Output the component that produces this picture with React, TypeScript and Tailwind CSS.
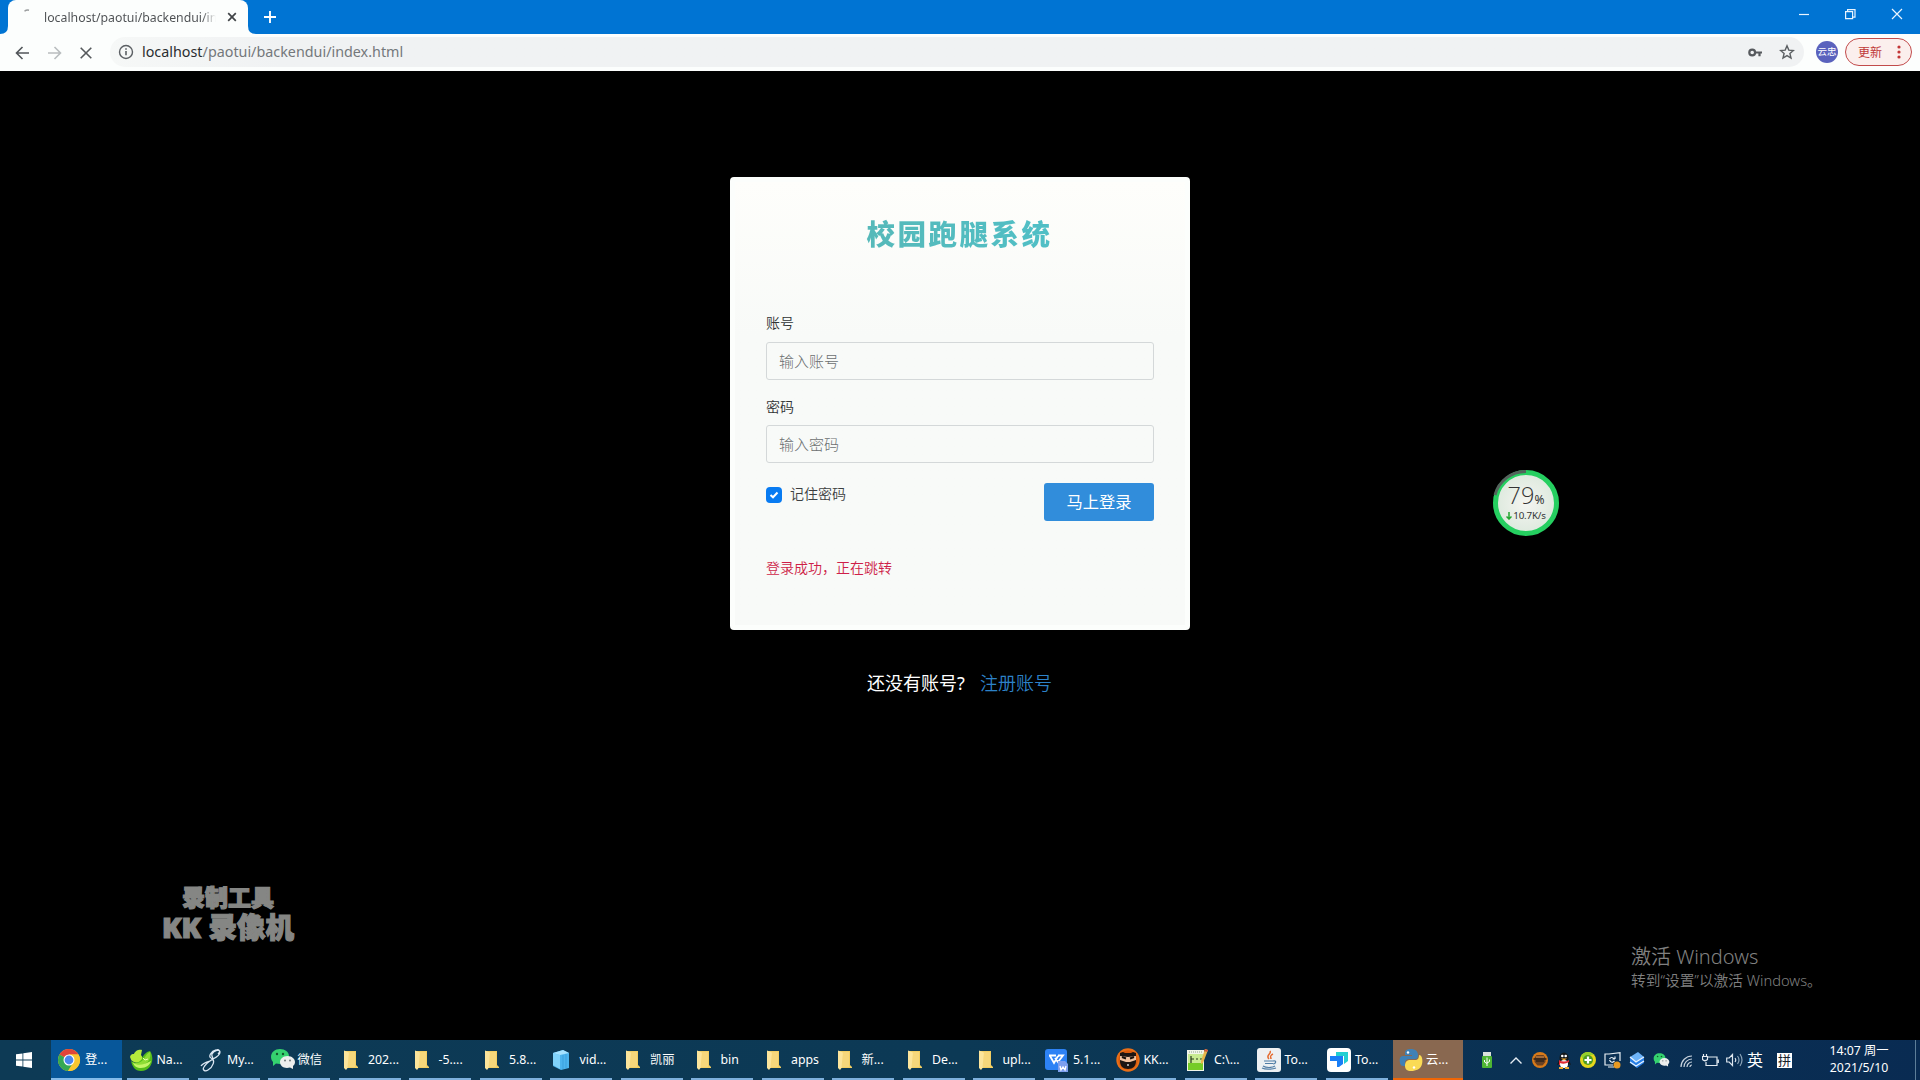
import React from "react";

const FONT = "font-['Noto_Sans','Noto_Sans_CJK_SC',sans-serif]";

const Folder = () => (
  <svg width="24" height="24" viewBox="0 0 24 24">
    <path d="M4 3h12v14l2 2v1H4z" fill="#f3cf63" />
    <path d="M4 2.500l5 2V18l-3 4-2-2z" fill="#fce59c" />
    <path d="M9 4h6v15H7.500z" fill="#f6d77b" />
  </svg>
);

const Chrome = () => (
  <svg width="24" height="24" viewBox="0 0 24 24">
    <circle cx="12" cy="12" r="11" fill="#f9c62f" />
    <path d="M12 12L2.500 6.500A11 11 0 0 1 21.500 6.500H12z" fill="#e0443a" />
    <path d="M12 12L2.500 6.500A11 11 0 0 0 11 23l5.500-8.500z" fill="#35a853" />
    <path d="M12 6.500h9.500A11 11 0 0 1 11 23l5.800-9z" fill="#f9c62f" />
    <circle cx="12" cy="12" r="5.500" fill="#fff" />
    <circle cx="12" cy="12" r="4.400" fill="#4a86ee" />
  </svg>
);

const Navicat = () => (
  <svg width="24" height="24" viewBox="0 0 24 24">
    <path d="M1 9c1-3 2-3 4-3 1-4 6-5 8-4l-1 5 2 3c-1 4-6 6-9 4-3-1-3-3-4-5z" fill="#b5ec3c" />
    <path d="M2 13c4 3 8 2 11-2 1-4 4-7 8-8 5 7 2 20-9 20-6 0-9-5-10-10z" fill="#55bd1b" />
    <path d="M3 14c4 2 8 1 11-2 2-3 4-7 7-8 1 4 0 9-5 12-5 3-11 2-13-2z" fill="#8edc35" />
    <path d="M4 15c5 3 11 2 18-2-1 4-5 7-10 7-4 0-7-2-8-5z" fill="#c3f565" />
    <path d="M14 10l2 2 3-1" stroke="#eaffb5" fill="none" />
  </svg>
);

const Script = () => (
  <svg width="24" height="24" viewBox="0 0 24 24" fill="none" stroke="#dce7f3" strokeWidth="1.300">
    <path d="M19 6c3-3 1-5-2-4-5 1-8 7-5 8 5 2 2 9-3 12-3 2-6 0-4-3 2-4 6-6 9-8 4-2 7-5 7-7 0-3-6-2-8 2-1 3 2 3 1 7M2 18c2-3 6-4 9-5" />
  </svg>
);

const WeChat = ({ size = 26 }: { size?: number }) => (
  <svg width={size} height={size} viewBox="0 0 26 26">
    <path d="M1 10C1 5 5 2 10 2s9 3 9 7-4 8-9 8l-4-.5L3 19v-4c-1-1-2-3-2-5z" fill="#35d26f" />
    <circle cx="7" cy="7" r="1.200" fill="#12582e" />
    <circle cx="13" cy="7" r="1.200" fill="#12582e" />
    <path d="M10 15c0-3 3-6 7.500-6s7.500 3 7.500 6c0 2-1 3-2 4v3l-3-1.500C14 22 10 19 10 15z" fill="#eceeed" />
    <circle cx="15" cy="13.500" r="1" fill="#71797a" />
    <circle cx="20" cy="13.500" r="1" fill="#71797a" />
  </svg>
);

const Cube = () => (
  <svg width="24" height="24" viewBox="0 0 24 24">
    <path d="M1 5l10-3 6 3v15l-8 2-8-4z" fill="#4cb4ee" />
    <path d="M1 5l7 2v14l-7-4z" fill="#80d3fb" />
    <path d="M1 5l10-3 6 3-9 2z" fill="#a5e2ff" />
    <path d="M11 7v14M14 6v14" stroke="#3ba1de" />
  </svg>
);

const Wps = () => (
  <svg width="24" height="24" viewBox="0 0 24 24">
    <rect x="0" y="1" width="22" height="21" rx="3" fill="#2d82f5" />
    <path d="M4 7.500h7M5 8l4 7 4-7M10 10l3 4 5-6.500h-5" fill="none" stroke="#fff" strokeWidth="1.800" />
    <path d="M13 13h7l3 3v8H13z" fill="#7d9fee" />
    <path d="M15 18l1 4 2-3 2 3 1-4" fill="none" stroke="#fff" strokeWidth="1.300" />
  </svg>
);

const Ninja = ({ size = 24 }: { size?: number }) => (
  <svg width={size} height={size} viewBox="0 0 24 24">
    <circle cx="12" cy="12" r="11.700" fill="#e96f18" />
    <circle cx="12" cy="12" r="9.800" fill="#d85b0d" />
    <path d="M4 5l3-1 2 1h6l2-1 3 1v8c0 5-3 8-8 8s-8-3-8-8z" fill="#1c1512" />
    <path d="M4 8l8 1 8-1v4l-6 2h-4l-6-2z" fill="#f1c3a0" />
    <path d="M6 9l4 1.500M18 9l-4 1.500" stroke="#16100c" strokeWidth="2" />
    <circle cx="12" cy="17" r="1" fill="#ccc" />
  </svg>
);

const TrayNinja = () => (
  <svg width="16" height="16" viewBox="0 0 16 16">
    <circle cx="8" cy="8" r="8" fill="#d87a19" />
    <path d="M2.500 6l2-3h7l2 3v4l-3 3.500h-5L2.500 10z" fill="#6a4122" />
    <path d="M1.500 7h13M4 9h8" stroke="#2f2218" strokeWidth="1.500" />
    <path d="M4 5h8" stroke="#dc9551" />
  </svg>
);

const Notepad = () => (
  <svg width="24" height="24" viewBox="0 0 24 24">
    <path d="M1 2h17v21H1z" fill="#f1f5e9" />
    <path d="M2 8h15v14H2z" fill="#75cc27" />
    <path d="M2 6h15v9H2z" fill="#c8eb91" />
    <path d="M3 4h13" stroke="#91a58a" strokeDasharray="1 1" />
    <path d="M5 8v7M5 11h3M10 11h2M14 11h2" stroke="#263a1b" strokeWidth="1.200" />
    <path d="M19 1l3 1-5 13-2 1v-3z" fill="#e7b64b" />
    <path d="M19 1l3 1-1 2-3-1z" fill="#d45b43" />
  </svg>
);

const Java = () => (
  <svg width="24" height="24" viewBox="0 0 24 24">
    <rect width="24" height="24" rx="3" fill="#edf0f2" />
    <path d="M13 3c2 3-5 4-1 8M16 6c-4 2-2 3-2 5" fill="none" stroke="#e56b2f" strokeWidth="1.500" />
    <path d="M7 13h9M8 15.500h8M6 18c3 2 9 2 12 0M16 13c4-1 3 3 0 3M5 20c4 2 11 1 14 0" fill="none" stroke="#517da5" strokeWidth="1.200" />
  </svg>
);

const Todesk = () => (
  <svg width="24" height="24" viewBox="0 0 24 24">
    <rect width="24" height="24" rx="4" fill="#fff" />
    <path d="M9 4h12v9l-4 3V8H9z" fill="#22cfd2" />
    <path d="M3 8h13v8l-4 3h-2v-6H3z" fill="#197ef6" />
  </svg>
);

const Python = () => (
  <svg width="24" height="24" viewBox="0 0 24 24">
    <path d="M12 1C8 1 6 2 6 5v2h7v1H4C1 8 0 11 1 15c1 3 2 3 5 3v-3c0-3 2-4 4-4h6c2 0 3-1 3-4 0-4-3-6-7-6z" fill="#3f81b6" />
    <path d="M20 7c3 0 4 5 3 9-1 5-6 7-11 7-4 0-6-2-6-5 0-4 2-6 5-6h5c3 0 4-2 4-5z" fill="#fadb55" />
    <circle cx="9" cy="4.500" r="1.200" fill="#fff" />
    <circle cx="15" cy="19.500" r="1.200" fill="#fff" />
  </svg>
);

const tasks: { icon: React.ReactNode; label: string }[] = [
  { icon: <Navicat />, label: "Na..." },
  { icon: <Script />, label: "My..." },
  { icon: <WeChat />, label: "微信" },
  { icon: <Folder />, label: "202..." },
  { icon: <Folder />, label: "-5...." },
  { icon: <Folder />, label: "5.8..." },
  { icon: <Cube />, label: "vid..." },
  { icon: <Folder />, label: "凯丽" },
  { icon: <Folder />, label: "bin" },
  { icon: <Folder />, label: "apps" },
  { icon: <Folder />, label: "新..." },
  { icon: <Folder />, label: "De..." },
  { icon: <Folder />, label: "upl..." },
  { icon: <Wps />, label: "5.1..." },
  { icon: <Ninja />, label: "KK..." },
  { icon: <Notepad />, label: "C:\\..." },
  { icon: <Java />, label: "To..." },
  { icon: <Todesk />, label: "To..." },
];

function Browser() {
  return (
    <header className="shrink-0">
      <div className="flex h-[34px] bg-[#0074d3]">
        <div className="flex w-[8px] items-end">
          <svg width="8" height="8"><path d="M0 8Q8 8 8 0V8z" fill="#fcfefd" /></svg>
        </div>
        <div className="flex w-[240px] items-center rounded-t-[8px] bg-[#fcfefd]">
          <svg className="ml-[11px] shrink-0" width="16" height="20" viewBox="0 0 16 20" fill="none" stroke="#9a9d9e" strokeWidth="1.500"><path d="M5.500 4.300Q7.500 2.600 10 3.200" /></svg>
          <span className="mt-[1px] ml-[9px] w-[172px] overflow-hidden bg-linear-to-r from-[#4c4f52] from-92% to-transparent bg-clip-text text-[12.300px] leading-[20px] whitespace-nowrap text-transparent">localhost/paotui/backendui/in</span>
          <svg className="ml-[11px] shrink-0" width="10" height="10" viewBox="0 0 10 10" stroke="#404447" strokeWidth="1.700"><path d="M1.200 1.200l7.600 7.600M8.800 1.200L1.200 8.800" /></svg>
        </div>
        <div className="flex w-[8px] items-end">
          <svg width="8" height="8"><path d="M8 8Q0 8 0 0V8z" fill="#fcfefd" /></svg>
        </div>
        <svg className="mt-[11px] ml-[8px]" width="12" height="12" stroke="#fff" strokeWidth="1.900"><path d="M6 0v12M0 6h12" /></svg>
        <div className="mt-[8px] mr-[17px] ml-auto flex gap-[35px]">
          <svg width="12" height="12" stroke="#e9f4ff" strokeWidth="1.200"><path d="M1 6.500h10" /></svg>
          <svg width="11" height="12" fill="none" stroke="#e9f4ff" strokeWidth="1.200"><path d="M.6 3.600h7v7h-7zM2.600 3.600v-2h7.400v7.500H7.600" /></svg>
          <svg width="12" height="12" fill="none" stroke="#e9f4ff" strokeWidth="1.200"><path d="M1 1l10 10M11 1L1 11" /></svg>
        </div>
      </div>
      <div className="flex h-[37px] items-center bg-[#fcfefd]">
        <svg className="ml-[15px]" width="14" height="14" viewBox="0 0 14 14" fill="none" stroke="#52565a" strokeWidth="1.600"><path d="M14 7H1.500M7.500 1L1.500 7l6 6" /></svg>
        <svg className="ml-[19px]" width="14" height="14" viewBox="0 0 14 14" fill="none" stroke="#b9bdbf" strokeWidth="1.600"><path d="M0 7h12.500M6.500 1l6 6-6 6" /></svg>
        <svg className="ml-[18px]" width="12" height="12" viewBox="0 0 12 12" stroke="#55595c" strokeWidth="1.600"><path d="M.7.700l10.600 10.600M11.300.700L.7 11.300" /></svg>
        <div className="mb-[2px] ml-[18px] flex h-[30px] flex-1 items-center rounded-full bg-linear-to-r from-[#f6f8f7] to-[#f0f2f3] to-10%">
          <svg className="mt-[1px] ml-[8px]" width="16" height="16" viewBox="0 0 16 16" fill="none" stroke="#5b5f63" strokeWidth="1.400"><circle cx="8" cy="8" r="6.500" /><path d="M8 7v4.300M8 4.300v1.500" strokeWidth="1.600" /></svg>
          <span className="ml-[8px] text-[14.330px] leading-[20px] text-[#74787b]"><span className="text-[#2a2d30]">localhost</span>/paotui/backendui/index.html</span>
          <svg className="mt-[1px] ml-auto" width="14" height="9" viewBox="0 0 14 9" fill="none" stroke="#56595d"><circle cx="4.200" cy="4.500" r="2.900" strokeWidth="2.200" /><path d="M7 4.500h7M11.500 4.500v3.800" strokeWidth="2.200" /></svg>
          <svg className="mt-[1px] mr-[9px] ml-[17px]" width="16" height="16" viewBox="0 0 16 16" fill="none" stroke="#5b5f62" strokeWidth="1.400"><path d="M8 1.800l1.800 4.300 4.600.4-3.500 3 1.100 4.500L8 11.600 4 14l1.100-4.500-3.500-3 4.600-.4z" /></svg>
        </div>
        <div className="mb-[1px] ml-[12px] flex size-[22px] items-center justify-center rounded-full bg-[#5a62bd] text-[9.500px] whitespace-nowrap text-white">云忠</div>
        <div className="mb-[1px] mr-[8px] ml-[7px] flex h-[28px] w-[67px] items-center rounded-full border border-[#c24b4b] bg-[#fbefed] pl-[12px] text-[12px] text-[#bf3838]">
          <span className="mt-[1px]">更新</span>
          <svg className="ml-[15px]" width="4" height="14" fill="#c23636"><circle cx="2" cy="2" r="1.600" /><circle cx="2" cy="7" r="1.600" /><circle cx="2" cy="12" r="1.600" /></svg>
        </div>
      </div>
    </header>
  );
}

function Login() {
  const input = "h-[38px] w-full rounded-[3px] border border-[#d4d8d9] bg-transparent px-[12px] text-[15px] font-light placeholder:text-[#6b6f70] placeholder:opacity-100 outline-none";
  return (
    <main className="flex flex-1 flex-col items-center bg-black pt-[106px]">
      <form className="flex h-[453px] w-[460px] flex-col rounded-[4px] border-[5px] border-[#fcfefc] bg-linear-to-b from-[#fefefb] to-[#f8faf8] to-35% px-[31px]">
        <h1 className="mt-[34px] mr-[2px] self-center bg-linear-to-r from-[#56b9b9] to-[#50bfc6] bg-clip-text pl-[1px] text-[28.500px] leading-[36px] font-black tracking-[2.500px] text-transparent">校园跑腿系统</h1>
        <label className="mt-[61px] text-[14px] leading-[20px] font-[350] text-[#303334]">账号</label>
        <input className={input + " mt-[9px]"} placeholder="输入账号" />
        <label className="mt-[17px] text-[14px] leading-[20px] font-[350] text-[#303334]">密码</label>
        <input className={input + " mt-[8px]"} placeholder="输入密码" />
        <div className="mt-[20px] flex justify-between">
          <label className="flex h-[24px] items-center gap-[8px] text-[14px] font-[350] text-[#3c3f40]">
            <span className="flex size-[16px] items-center justify-center rounded-[4px] bg-[#087bf2]">
              <svg width="10" height="8" viewBox="0 0 10 8" fill="none" stroke="#fff" strokeWidth="2"><path d="M1.500 4L4 6.300 8.500 1.500" /></svg>
            </span>
            <span className="mb-[3px]">记住密码</span>
          </label>
          <button type="button" className="h-[38px] w-[110px] rounded-[3px] bg-[#318ddb] text-[16.300px] leading-[36px] text-white">马上登录</button>
        </div>
        <p className="mt-[37px] text-[14px] leading-[20px] font-[350] text-[#ce1f48]">登录成功，正在跳转</p>
      </form>
      <p className="mt-[39px] flex h-[28px] w-[186px] items-center justify-between text-[18px] whitespace-nowrap text-white">
        <span>还没有账号?</span>
        <a className="pr-[1px] font-[350] text-[#2d82c8]">注册账号</a>
      </p>
    </main>
  );
}

function Tray() {
  return (
    <div className="flex flex-1 items-center text-white">
      <svg className="ml-[19px]" width="10" height="16" viewBox="0 0 10 16"><rect x="1" y="0" width="8" height="4" fill="#d9e1dc" /><rect y="4" width="10" height="12" rx="1" fill="#4eb534" /><path d="M5 5.500V14M2.500 8v2L5 11.500M7.500 7.500v2L5 11" stroke="#fff" fill="none" /></svg>
      <svg className="ml-[18px]" width="12" height="7" fill="none" stroke="#e6edf4" strokeWidth="1.400"><path d="M.5 6.500L6 1l5.500 5.500" /></svg>
      <div className="ml-[10px]"><TrayNinja /></div>
      <svg className="ml-[8px]" width="16" height="17" viewBox="0 0 16 17"><ellipse cx="8" cy="6" rx="4.500" ry="5.500" fill="#15191c" /><path d="M3 8L1 13l2-1c1 4 9 4 10 0l2 1-2-5z" fill="#161719" /><ellipse cx="8" cy="12" rx="4" ry="4" fill="#fff" /><circle cx="6.300" cy="4" r="1.300" fill="#fff" /><circle cx="9.700" cy="4" r="1.300" fill="#fff" /><path d="M5 6.500h6L8 8.500z" fill="#f6ad30" /><path d="M3 8q5 3 10 0v2q-5 3-9 1v2H3z" fill="#e02a34" /><path d="M3 16h4M9 16h4" stroke="#ecaa35" strokeWidth="2" /></svg>
      <svg className="ml-[8px]" width="16" height="16" viewBox="0 0 16 16"><circle cx="8" cy="8" r="8" fill="#e5d71c" /><path d="M1 4a8 8 0 0 1 13-1q-6-1-10 5z" fill="#93cf2c" /><circle cx="8" cy="8" r="5" fill="#4d9b22" /><path d="M8 4.500v7M4.500 8h7" stroke="#fff" strokeWidth="2.200" /></svg>
      <svg className="ml-[8px]" width="17" height="17" viewBox="0 0 17 17" fill="none" stroke="#e8eff4" strokeWidth="1.200"><path d="M5 2L16 .700V9M5 2H1v11h8M4 15h6M5.500 7q2-3 5 0M11 7V4.500M11 7H8.500M5.500 8q2 4 5 1" /><circle cx="13" cy="13" r="3.500" fill="#e99a22" stroke="none" /></svg>
      <svg className="ml-[8px]" width="16" height="16" viewBox="0 0 16 16"><path d="M1 5l8-5 6 5-8 5z" fill="#6db4fa" /><path d="M1 5l6 5 8-5v6l-7 5-7-5z" fill="#287fe7" /><path d="M1 5l6 5 8-5M1 10l6 4 8-5" fill="none" stroke="#e9f4ff" strokeWidth="1.300" /></svg>
      <div className="ml-[8px]"><WeChat size={17} /></div>
      <svg className="ml-[10px] mt-[3px]" width="14" height="13" viewBox="0 0 14 13" fill="none" stroke="#c8d3de" strokeWidth="1.200"><path d="M1 12A11 11 0 0 1 12 1M4 12a8 8 0 0 1 8-8M7 12a5 5 0 0 1 5-5M10 12a2 2 0 0 1 2-2" /></svg>
      <svg className="ml-[8px]" width="17" height="13" viewBox="0 0 17 13" fill="none" stroke="#e2e9f0" strokeWidth="1.200"><path d="M6 3h9v8.500H4V8M16.300 5.500v3.500M.5 2.500h5v3Q3 8 .5 5.500zM1.500 0v3M4.500 0v3" /></svg>
      <svg className="ml-[7px]" width="17" height="14" viewBox="0 0 17 14" fill="none" stroke="#dce5ed" strokeWidth="1.200"><path d="M.7 5h2.500L6.500 1.500v11L3.200 9H.7zM9 5q1.500 2 0 4" /><path d="M11.500 3q3 4 0 8M14 1q4 6 0 12" stroke="#8ca4b8" /></svg>
      <span className="ml-[4px] -mt-[1px] text-[16px] leading-[20px]">英</span>
      <span className="ml-[14px] flex size-[15px] items-center justify-center bg-white text-[13px] leading-none text-[#17222b]">拼</span>
      <div className="mb-[2px] ml-[30px] w-[74px] text-center text-[12.300px] leading-[17px] whitespace-nowrap">
        <div>14:07 周一</div>
        <div>2021/5/10</div>
      </div>
      <div className="mr-[4px] ml-auto h-full w-px bg-[#5d7e99]" />
    </div>
  );
}

function Taskbar() {
  return (
    <footer className="flex h-[40px] shrink-0 bg-linear-to-r from-[#0d3a55] via-[#0c3955] via-50% to-[#092b52]">
      <div className="flex w-[51px] items-center">
        <svg className="ml-[16px]" width="16" height="16" viewBox="0 0 16 16" fill="#fff"><path d="M0 2.300l6.500-.9v6.200H0zM7.300 1.300L16 0v7.600H7.300zM0 8.400h6.500v6.200L0 13.700zM7.300 8.400H16V16l-8.700-1.200z" /></svg>
      </div>
      <div className="flex w-[71px] items-center border-b-2 border-[#84bbea] bg-[#07579a] pt-[2px] pl-[6px] text-[12.300px] text-white">
        <Chrome />
        <span className="ml-[4px] whitespace-nowrap">登...</span>
      </div>
      <div className="flex pl-[5px]">
        {tasks.map((task, index) => (
          <div key={index} className="w-[70.500px]">
            <div className="flex h-[40px] w-[62px] items-center border-b-2 border-[#7eb0dc] pt-[2px] pl-[1.500px] text-[12.300px] text-white">
              <span className="flex w-[28px] shrink-0 items-center">{task.icon}</span>
              <span className="shrink-0 whitespace-nowrap">{task.label}</span>
            </div>
          </div>
        ))}
      </div>
      <div className="-ml-[3px] flex w-[70px] items-center border-b-2 border-[#f16606] bg-[#896850] pt-[2px] pl-[6px] text-[12.300px] text-white">
        <Python />
        <span className="ml-[3px] whitespace-nowrap">云...</span>
      </div>
      <Tray />
    </footer>
  );
}

export default function App() {
  return (
    <div className={`relative flex h-[1080px] w-[1920px] flex-col overflow-hidden bg-black ${FONT}`}>
      <Browser />
      <Login />
      <Taskbar />

      <div className="absolute top-[470px] left-[1493px] flex size-[66px] flex-col items-center rounded-full border-[5px] border-[#25cf60] bg-[radial-gradient(#f5f5f1,#d6e6d8)]">
        <svg className="absolute -top-[5px] -left-[5px]" width="66" height="66" fill="none"><path d="M2 25A31.500 31.500 0 0 1 33 1.500" stroke="#54635c" strokeWidth="3" /></svg>
        <div className="mt-[8px] flex h-[24px] items-baseline leading-[24px] text-[#333]"><span className="font-['Open_Sans',sans-serif] text-[23.500px] font-light">79</span><span className="text-[12px]">%</span></div>
        <div className="mt-[3px] flex items-center text-[9.800px] leading-[12px] tracking-[-0.2px] whitespace-nowrap text-[#343434]">
          <svg className="mr-[1px]" width="6" height="8" fill="none" stroke="#22a52f" strokeWidth="1.500"><path d="M3 0v7M.5 4.500L3 7l2.500-2.500" /></svg>10.7K/s
        </div>
      </div>

      <div className="absolute top-[883px] left-[161px] w-[134px] text-center font-black whitespace-nowrap text-[#858684] [-webkit-text-stroke:1.2px_#858684]">
        <div className="text-[23px] leading-[28px]">录制工具</div>
        <div className="text-[28.500px] leading-[33px]">KK 录像机</div>
      </div>

      <div className="absolute top-[943px] left-[1631px] font-[350] whitespace-nowrap text-[#808080]">
        <div className="text-[20px] leading-[27px]">激活 Windows</div>
        <div className="text-[14.700px] leading-[21px]">转到“设置”以激活 Windows。</div>
      </div>
    </div>
  );
}
